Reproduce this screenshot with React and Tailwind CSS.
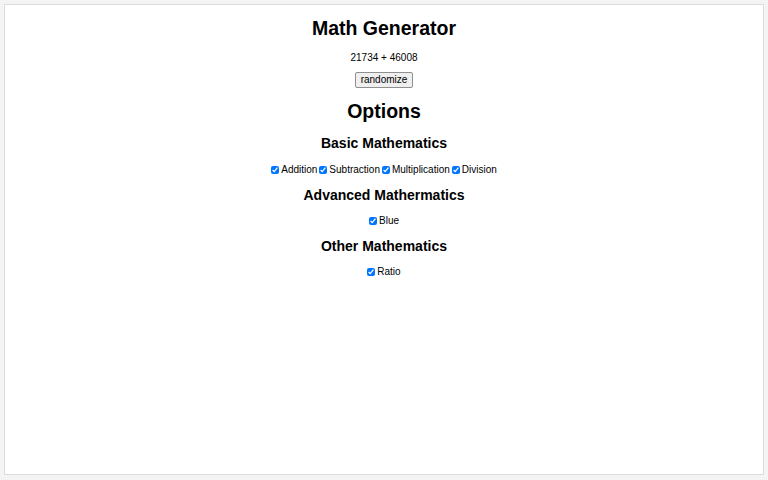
import React, { useState } from "react";

const Check = ({ label, checked, onChange }) => (
  <label className="inline-flex items-center gap-[2px] mx-[1px]">
    <input
      type="checkbox"
      checked={checked}
      onChange={onChange}
      className="w-[8px] h-[8px] m-0 accent-[#0075ff]"
    />
    <span>{label}</span>
  </label>
);

const App = () => {
  const [a, setA] = useState(21734);
  const [b, setB] = useState(46008);
  const [opts, setOpts] = useState({
    Addition: true,
    Subtraction: true,
    Multiplication: true,
    Division: true,
    Blue: true,
    Ratio: true,
  });

  const toggle = (k) => setOpts({ ...opts, [k]: !opts[k] });

  const randomize = () => {
    setA(Math.floor(Math.random() * 90000) + 10000);
    setB(Math.floor(Math.random() * 90000) + 10000);
  };

  return (
    <div className="h-[480px] w-[768px] bg-[#f4f4f4] p-[4px] font-['Liberation_Sans',Arial,sans-serif] text-black">
      <div className="h-[471px] bg-white border border-[#dcdcdc] flex flex-col items-center">
        <h1 className="text-[19.5px] font-bold mt-[11px] leading-[24px]">Math Generator</h1>
        <div className="text-[10px] mt-[12px] leading-[12px]">
          {a} + {b}
        </div>
        <button
          onClick={randomize}
          className="mt-[8px] text-[10px] leading-[12px] px-[5px] py-[1px] bg-[#efefef] border border-[#8f8f8f] rounded-[2px]"
        >
          randomize
        </button>
        <h2 className="text-[19.5px] font-bold mt-[11px] leading-[24px]">Options</h2>
        <h3 className="text-[14px] font-bold mt-[11px] leading-[18px]">Basic Mathematics</h3>
        <div className="text-[10px] mt-[12px] leading-[12px] flex items-center">
          {["Addition", "Subtraction", "Multiplication", "Division"].map((k) => (
            <Check key={k} label={k} checked={opts[k]} onChange={() => toggle(k)} />
          ))}
        </div>
        <h3 className="text-[14px] font-bold mt-[10px] leading-[18px]">Advanced Mathermatics</h3>
        <div className="text-[10px] mt-[11px] leading-[12px] flex items-center">
          <Check label="Blue" checked={opts.Blue} onChange={() => toggle("Blue")} />
        </div>
        <h3 className="text-[14px] font-bold mt-[10px] leading-[18px]">Other Mathematics</h3>
        <div className="text-[10px] mt-[11px] leading-[12px] flex items-center">
          <Check label="Ratio" checked={opts.Ratio} onChange={() => toggle("Ratio")} />
        </div>
      </div>
    </div>
  );
};

export default App;
